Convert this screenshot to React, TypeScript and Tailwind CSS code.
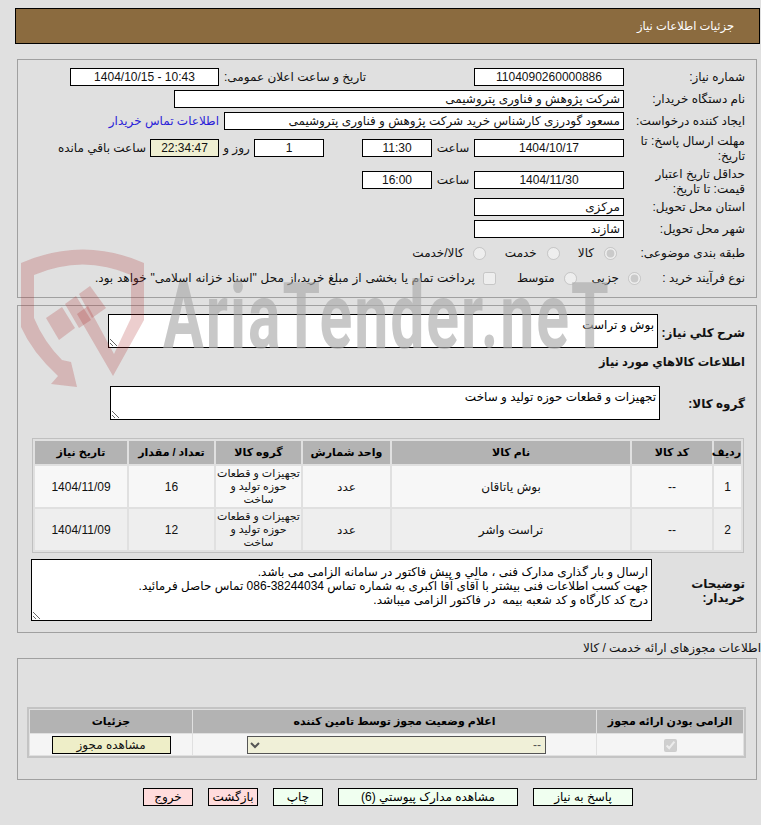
import React from "react";

const font = "font-['Liberation_Sans','DejaVu_Sans',sans-serif]";

function Box({ w, children, center = true, tint = false }: { w: string; children?: React.ReactNode; center?: boolean; tint?: boolean }) {
  return (
    <div
      className={`${w} h-[18px] shrink-0 border border-black leading-[16px] px-[3px] ${center ? "text-center" : "text-right"} ${tint ? "bg-[#efefd2]" : "bg-white"}`}
    >
      {children}
    </div>
  );
}

function Label({ children, className = "" }: { children: React.ReactNode; className?: string }) {
  return <div className={`w-[121px] shrink-0 pl-[8px] leading-[15px] ${className}`}>{children}</div>;
}

function Radio({ checked = false, className = "" }: { checked?: boolean; className?: string }) {
  return <input type="radio" disabled checked={checked} readOnly className={`m-0 w-[13px] h-[13px] shrink-0 ${className}`} />;
}

function Note({ className, text }: { className: string; text: string }) {
  return (
    <textarea
      readOnly
      dir="rtl"
      value={text}
      className={`block shrink-0 border border-black bg-white px-[3px] text-[12px] leading-[14px] text-black overflow-hidden outline-none ${font} ${className}`}
    />
  );
}

const items = [
  { id: "1", code: "--", name: "بوش یاتاقان", unit: "عدد", qty: "16", date: "1404/11/09", bg: "bg-[#f7f7f7]" },
  { id: "2", code: "--", name: "تراست واشر", unit: "عدد", qty: "12", date: "1404/11/09", bg: "bg-[#eeeeee]" },
];

function Th({ w, children }: { w: string; children: React.ReactNode }) {
  return <th className={`${w} h-[23px] p-0 bg-[#b3b3b3] text-center font-bold text-[11px] text-black whitespace-nowrap`}>{children}</th>;
}

function ActionBtn({ w, bg, children }: { w: string; bg: string; children: React.ReactNode }) {
  return (
    <button className={`${w} ${bg} h-[18px] shrink-0 border border-black leading-[15px] text-[12px] text-black text-center`}>
      {children}
    </button>
  );
}

// Faint shield and site name lying over the form
function Watermark() {
  return (
    <div className="absolute inset-0 pointer-events-none overflow-hidden" aria-hidden="true">
      <svg className="absolute left-0 top-[230px]" width="170" height="170" viewBox="0 0 170 170">
        <path
          d="M21 33 Q83 6 144 33 L144 90 L113 146 L77 84 L88 76 L114 124 L131 88 L131 45 Q83 24 34 45 L34 88 Q44 112 62 130 L71 132 L77 157 L51 154 L58 146 Q32 122 21 97 Z"
          fill="rgb(170,30,30)"
          fillOpacity="0.22"
        />
        <path d="M46 88 L62 77 L75 98 L59 110 Z" fill="rgb(170,30,30)" fillOpacity="0.22" />
        <path d="M65 74 L76 66 L91 90 L79 98 Z" fill="rgb(170,30,30)" fillOpacity="0.22" />
        <path d="M79 64 L90 56 L106 78 L92 88 Z" fill="rgb(170,30,30)" fillOpacity="0.22" />
      </svg>
      <div
        dir="ltr"
        className="absolute left-[163px] top-[282px] origin-left scale-x-[0.66] whitespace-nowrap font-['Roboto',sans-serif] font-bold text-[92px] leading-[70px] tracking-[3px] text-[rgba(170,170,170,0.65)]"
      >
        AriaTender.neT
      </div>
    </div>
  );
}

export default function App() {
  return (
    <div dir="rtl" className={`relative w-[761px] h-[825px] overflow-hidden bg-[#e0e0e0] text-[12px] text-[#111] ${font}`}>
      <div className="h-[8px]" />
      <div className="ml-[15px] mr-[1px] h-[36px] border border-black bg-[#8b6b3f] pr-[25px] leading-[34px] text-[11.5px] text-white">
        جزئيات اطلاعات نياز
      </div>

      <div className="mt-[15px] ml-[17px] mr-[4px] h-[239px] border border-[#a0a0a0] pt-[8px] pr-[11px]">
        <div className="flex h-[18px]">
          <Label className="leading-[18px]">شماره نیاز:</Label>
          <Box w="w-[150px]">1104090260000886</Box>
          <div className="w-[255px] shrink-0 pl-[5px] text-left leading-[18px]">تاریخ و ساعت اعلان عمومی:</div>
          <Box w="w-[149px]"><span dir="ltr">1404/10/15 - 10:43</span></Box>
        </div>
        <div className="flex h-[18px] mt-[4px]">
          <Label className="leading-[18px]">نام دستگاه خریدار:</Label>
          <Box w="w-[450px]" center={false}>شرکت پژوهش و فناوری پتروشیمی</Box>
        </div>
        <div className="flex h-[18px] mt-[4px]">
          <Label className="leading-[18px]">ایجاد کننده درخواست:</Label>
          <Box w="w-[400px]" center={false}>مسعود گودرزی کارشناس خرید شرکت پژوهش و فناوری پتروشیمی</Box>
          <div className="mr-[5px] leading-[18px] text-[#2a22d8]">اطلاعات تماس خریدار</div>
        </div>
        <div className="flex h-[18px] mt-[9px]">
          <Label className="-mt-[5px]">مهلت ارسال پاسخ: تا تاریخ:</Label>
          <Box w="w-[150px]">1404/10/17</Box>
          <div className="w-[42px] shrink-0 text-center leading-[18px]">ساعت</div>
          <Box w="w-[70px]">11:30</Box>
          <div className="w-[38px] shrink-0" />
          <Box w="w-[70px]">1</Box>
          <div className="w-[35px] shrink-0 text-center leading-[18px]">روز و</div>
          <Box w="w-[69px]" tint>22:34:47</Box>
          <div className="mr-[4px] leading-[18px]">ساعت باقي مانده</div>
        </div>
        <div className="flex h-[18px] mt-[14px]">
          <Label className="-mt-[4px]">حداقل تاریخ اعتبار قیمت: تا تاریخ:</Label>
          <Box w="w-[150px]">1404/11/30</Box>
          <div className="w-[42px] shrink-0 text-center leading-[18px]">ساعت</div>
          <Box w="w-[70px]">16:00</Box>
        </div>
        <div className="flex h-[18px] mt-[9px]">
          <Label className="leading-[18px]">استان محل تحویل:</Label>
          <Box w="w-[150px]" center={false}>مرکزی</Box>
        </div>
        <div className="flex h-[18px] mt-[4px]">
          <Label className="leading-[18px]">شهر محل تحویل:</Label>
          <Box w="w-[150px]" center={false}>شازند</Box>
        </div>
        <div className="flex items-center h-[18px] mt-[6px]">
          <div className="w-[128px] shrink-0 pl-[8px]">طبقه بندی موضوعی:</div>
          <Radio checked />
          <span className="mr-[10px]">کالا</span>
          <Radio className="mr-[18px]" />
          <span className="mr-[10px]">خدمت</span>
          <Radio className="mr-[19px]" />
          <span className="mr-[9px]">کالا/خدمت</span>
        </div>
        <div className="flex items-center h-[18px] mt-[7px]">
          <div className="w-[104px] shrink-0">نوع فرآیند خرید :</div>
          <Radio checked />
          <span className="mr-[9px]">جزیی</span>
          <Radio className="mr-[15px]" />
          <span className="mr-[9px]">متوسط</span>
          <input type="checkbox" disabled readOnly className="m-0 mr-[21px] w-[13px] h-[13px] shrink-0" />
          <span className="mr-[8px] whitespace-nowrap [word-spacing:0.5px]">پرداخت تمام يا بخشی از مبلغ خرید،از محل "اسناد خزانه اسلامی" خواهد بود.</span>
        </div>
      </div>

      <div className="mt-[7px] ml-[17px] mr-[4px] h-[328px] border border-[#a0a0a0] pr-[11px]">
        <div className="flex mt-[8px] h-[34px]">
          <div className="w-[87px] shrink-0 pt-[10px] font-bold text-[12px] whitespace-nowrap">شرح كلي نياز:</div>
          <Note className="w-[550px] h-[34px] py-[3px]" text="بوش و تراست" />
        </div>
        <div className="mt-[6px] h-[16px] font-bold text-[11.5px] leading-[16px]">اطلاعات كالاهاي مورد نياز</div>
        <div className="flex mt-[16px] h-[34px]">
          <div className="w-[85px] shrink-0 pt-[9px] font-bold text-[12px]">گروه کالا:</div>
          <Note className="w-[550px] h-[34px] py-[3px]" text="تجهیزات و قطعات حوزه تولید و ساخت" />
        </div>

        <table className="mt-[18px] w-[712px] mr-[1px] border border-[#c0c0c0] border-separate border-spacing-[2px] table-fixed">
          <thead>
            <tr>
              <Th w="w-[27px]">رديف</Th>
              <Th w="w-[80px]">کد کالا</Th>
              <Th w="w-[238px]">نام کالا</Th>
              <Th w="w-[87px]">واحد شمارش</Th>
              <Th w="w-[85px]">گروه کالا</Th>
              <Th w="w-[85px]">تعداد / مقدار</Th>
              <Th w="w-[92px]">تاریخ نیاز</Th>
            </tr>
          </thead>
          <tbody>
            {items.map((it) => (
              <tr key={it.id} className={`${it.bg} text-center`}>
                <td className="h-[41px] p-0">{it.id}</td>
                <td className="p-0">{it.code}</td>
                <td className="p-0">{it.name}</td>
                <td className="p-0">{it.unit}</td>
                <td className="p-0 text-[11px] leading-[13px] whitespace-nowrap">
                  تجهیزات و قطعات
                  <br />
                  حوزه تولید و
                  <br />
                  ساخت
                </td>
                <td className="p-0">{it.qty}</td>
                <td className="p-0">{it.date}</td>
              </tr>
            ))}
          </tbody>
        </table>

        <div className="flex mt-[6px] h-[62px]">
          <div className="w-[93px] shrink-0 pt-[18px] font-bold text-[12px] leading-[14px]">توضیحات خریدار:</div>
          <Note
            className="w-[621px] h-[62px] pt-[5px]"
            text={"ارسال و بار گذاری مدارک فنی ، مالي و پیش فاکتور در سامانه الزامی می باشد.\nجهت کسب اطلاعات فنی بیشتر با آقای آقا اکبری به شماره تماس 38244034-086 تماس حاصل فرمائید.\nدرج کد کارگاه و کد شعبه بیمه  در فاکتور الزامی میباشد."}
          />
        </div>
      </div>

      <div className="mt-[7px] h-[18px] leading-[16px]">اطلاعات مجوزهای ارائه خدمت / کالا</div>

      <div className="ml-[17px] mr-[4px] h-[122px] border border-[#a0a0a0] pt-[48px]">
        <table className="w-[717px] mr-[10px] border-2 border-[#c4c4c4] border-separate border-spacing-[1px] table-fixed">
          <thead>
            <tr>
              <Th w="w-[146px]">الزامی بودن ارائه مجوز</Th>
              <Th w="w-[403px]">اعلام وضعیت مجوز توسط تامین کننده</Th>
              <Th w="w-[162px]">جزئیات</Th>
            </tr>
          </thead>
          <tbody>
            <tr className="bg-[#f5f5f5]">
              <td className="h-[21px] p-0 text-center">
                <input type="checkbox" disabled checked readOnly className="m-0 align-middle w-[13px] h-[13px]" />
              </td>
              <td className="p-0">
                <select disabled dir="rtl" className="block mr-[50px] w-[299px] h-[18px] border border-[#555] bg-[#f0f0d8] text-[12px] text-[#555555] opacity-100">
                  <option>--</option>
                </select>
              </td>
              <td className="p-0">
                <div className="mx-auto w-[119px] h-[18px] border border-black bg-[#eeeec8] text-center leading-[16px]">مشاهده مجوز</div>
              </td>
            </tr>
          </tbody>
        </table>
      </div>

      <div className="mt-[8px] mr-[128px] flex">
        <ActionBtn w="w-[100px]" bg="bg-[#f0fff0]">پاسخ به نیاز</ActionBtn>
        <ActionBtn w="w-[180px] mr-[15px]" bg="bg-[#f0fff0]">مشاهده مدارک پیوستي (6)</ActionBtn>
        <ActionBtn w="w-[50px] mr-[15px]" bg="bg-[#f0fff0]">چاپ</ActionBtn>
        <ActionBtn w="w-[50px] mr-[15px]" bg="bg-[#ffdcdc]">بازگشت</ActionBtn>
        <ActionBtn w="w-[50px] mr-[15px]" bg="bg-[#ffdcdc]">خروج</ActionBtn>
      </div>

      <Watermark />
    </div>
  );
}
